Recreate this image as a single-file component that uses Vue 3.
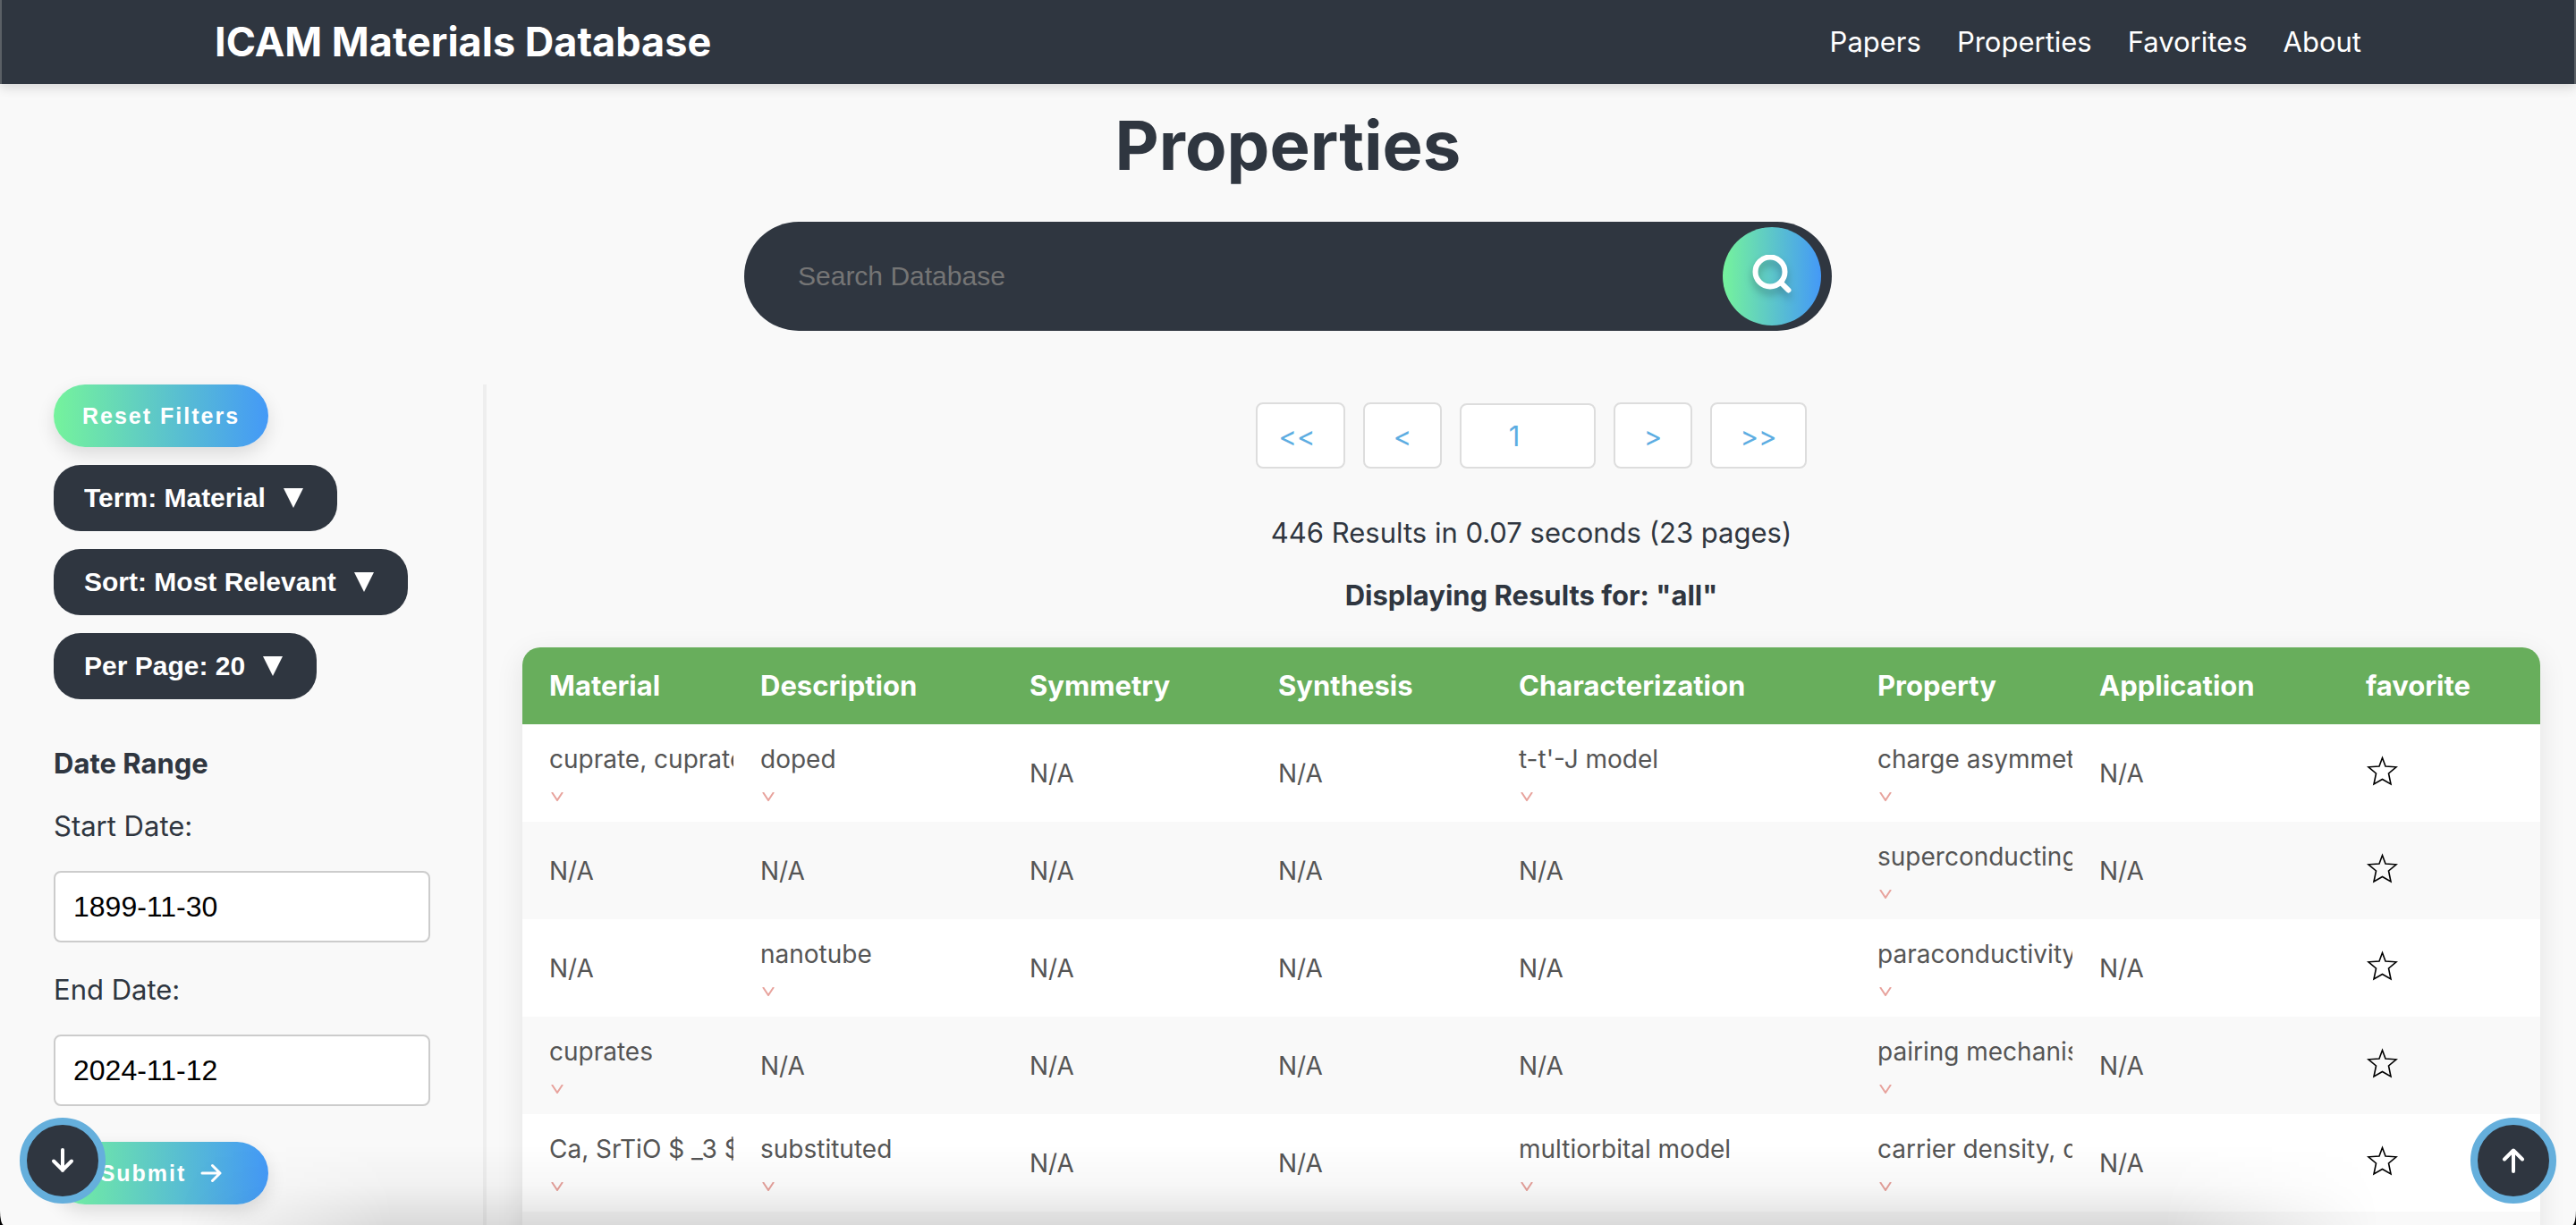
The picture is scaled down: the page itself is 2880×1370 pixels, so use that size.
<script setup>
import { ref } from 'vue'

const links = ['Papers', 'Properties', 'Favorites', 'About']
const filters = [
  { name: 'Term', options: ['Material', 'Description', 'Symmetry', 'Synthesis'] },
  { name: 'Sort', options: ['Most Relevant', 'Date'] },
  { name: 'Per Page', options: ['20', '10', '50', '100'] }
]
const query = ref('')
const page = ref(1)
const startDate = ref('1899-11-30')
const endDate = ref('2024-11-12')

const columns = [
  { title: 'Material', width: 236 },
  { title: 'Description', width: 301 },
  { title: 'Symmetry', width: 278 },
  { title: 'Synthesis', width: 269 },
  { title: 'Characterization', width: 401 },
  { title: 'Property', width: 248 },
  { title: 'Application', width: 298 },
  { title: 'favorite', width: 225 }
]
const total = columns.reduce((sum, c) => sum + c.width, 0)
const rows = [
  ['cuprate, cuprates', 'doped', '', '', "t-t'-J model", 'charge asymmetry', ''],
  ['', '', '', '', '', 'superconducting', ''],
  ['', 'nanotube', '', '', '', 'paraconductivity', ''],
  ['cuprates', '', '', '', '', 'pairing mechanism', ''],
  ['Ca, SrTiO $ _3 $', 'substituted', '', '', 'multiorbital model', 'carrier density, d', ''],
  ['', '', '', '', '', '', '']
]
</script>

<template>
  <div class="page">
    <header class="topbar">
      <a class="brand" href="#">ICAM Materials Database</a>
      <nav class="nav">
        <a v-for="link in links" :key="link" href="#">{{ link }}</a>
      </nav>
    </header>

    <h1 class="title">Properties</h1>

    <form class="search" @submit.prevent>
      <input v-model="query" type="text" placeholder="Search Database" aria-label="Search Database" />
      <button type="submit" aria-label="Search">
        <svg viewBox="0 0 48 48" width="48" height="48" fill="none" stroke="#fff" stroke-width="6">
          <circle cx="22" cy="19" r="16.5" />
          <path d="M34 31l8.500 8.500" stroke-linecap="round" />
        </svg>
      </button>
    </form>

    <div class="content">
      <aside class="sidebar">
        <button class="pill" type="button">Reset Filters</button>
        <span v-for="f in filters" :key="f.name" class="dropdown">
          <select :aria-label="f.name">
            <option v-for="o in f.options" :key="o">{{ f.name }}: {{ o }}</option>
          </select>
          <span class="caret"></span>
        </span>
        <form class="dates" @submit.prevent>
          <h2>Date Range</h2>
          <label for="start">Start Date:</label>
          <input id="start" v-model="startDate" type="text" />
          <label for="end">End Date:</label>
          <input id="end" v-model="endDate" type="text" />
          <button class="pill" type="submit">
            Submit
            <svg viewBox="0 0 24 24" width="24" height="24" fill="none" stroke="#fff" stroke-width="3" stroke-linecap="round" stroke-linejoin="round">
              <path d="M2 12h20M13.500 3.500l8.500 8.500l-8.500 8.500" />
            </svg>
          </button>
        </form>
      </aside>

      <main class="results">
        <div class="pager">
          <button type="button" class="first">&lt;&lt;</button>
          <button type="button">&lt;</button>
          <input v-model="page" type="text" aria-label="Page" />
          <button type="button">&gt;</button>
          <button type="button" class="last">&gt;&gt;</button>
        </div>
        <p class="summary">446 Results in 0.07 seconds (23 pages)</p>
        <p class="summary strong">Displaying Results for: "all"</p>

        <table class="grid">
          <colgroup>
            <col v-for="c in columns" :key="c.title" :style="{ width: (c.width / total) * 100 + '%' }" />
          </colgroup>
          <thead>
            <tr>
              <th v-for="c in columns" :key="c.title" scope="col">{{ c.title }}</th>
            </tr>
          </thead>
          <tbody>
            <tr v-for="(row, i) in rows" :key="i">
              <td v-for="(cell, j) in row" :key="j">
                <template v-if="cell">
                  <div class="value">{{ cell }}</div>
                  <button class="expand" type="button" aria-label="Expand">
                    <svg viewBox="0 0 14 10" width="14" height="10" fill="none" stroke="#e8a39d" stroke-width="2">
                      <path d="M1 0l6 9l6-9" />
                    </svg>
                  </button>
                </template>
                <template v-else>N/A</template>
              </td>
              <td>
                <button class="star" type="button" aria-label="Add to favorites">
                  <svg viewBox="0 0 36 36" width="36" height="36" fill="none" stroke="#000" stroke-width="1.6">
                    <path d="M18.500 3.500L22 13L34 13.800L25.500 21L28 33L18.500 27.500L9 33L11.500 21L3 13.800L15 13Z" />
                  </svg>
                </button>
              </td>
            </tr>
          </tbody>
        </table>
      </main>
    </div>

    <div class="fade"></div>
    <button class="jump down" type="button" aria-label="Scroll to bottom">
      <svg viewBox="0 0 28 28" width="28" height="28">
        <path d="M14 2v23M4 14.500l10 10l10-10" />
      </svg>
    </button>
    <button class="jump up" type="button" aria-label="Scroll to top">
      <svg viewBox="0 0 28 28" width="28" height="28">
        <path d="M14 26V3M4 12.500L14 2.500l10 10" />
      </svg>
    </button>
  </div>
</template>

<style>
html,
body {
  margin: 0;
  height: 100%;
  overflow: hidden;
  background: #000;
}
</style>

<style scoped>
.page {
  height: 100vh;
  overflow: hidden;
  position: relative;
  border-radius: 0 0 4px 4px / 0 0 16px 16px;
  background: #f9f9f9;
  color: #2f3640;
  font-family: Inter, sans-serif;
  font-size: 31px;
  line-height: 50px;
}
button,
input,
select {
  box-sizing: border-box;
  margin: 0;
  font-family: "Liberation Sans", Arial, sans-serif;
}
button {
  cursor: pointer;
}
svg {
  display: block;
}
.topbar {
  display: flex;
  align-items: center;
  justify-content: space-between;
  height: 94px;
  padding: 0 238px;
  border: 0 solid #5b6066;
  border-width: 0 2px;
  background: #2f3640;
  box-shadow: 0 4px 12px rgba(0, 0, 0, 0.14);
}
.topbar a {
  color: #fff;
  text-decoration: none;
}
.brand {
  font-size: 45px;
  font-weight: 700;
}
.nav {
  display: flex;
  gap: 40px;
}
.title {
  margin: 18px 0 36px;
  font-size: 76px;
  line-height: 100px;
  font-weight: 700;
  text-align: center;
}
.search {
  display: flex;
  align-items: center;
  box-sizing: border-box;
  width: 1216px;
  max-width: 90%;
  height: 122px;
  margin: 0 auto 60px;
  padding: 0 12px 0 60px;
  border-radius: 61px;
  background: #2f3640;
}
.search input {
  flex: 1;
  min-width: 0;
  padding: 0;
  border: 0;
  outline: 0;
  background: none;
  color: #fff;
  font-size: 30px;
}
.search input::placeholder {
  color: #757575;
}
.search button {
  display: flex;
  align-items: center;
  justify-content: center;
  width: 110px;
  height: 110px;
  padding: 0;
  border: 0;
  border-radius: 50%;
  background: linear-gradient(90deg, #75f39c, #4499f7);
}
.search svg {
  filter: drop-shadow(0 6px 4px rgba(0, 0, 0, 0.25));
}
.content {
  display: flex;
}
.sidebar {
  display: flex;
  flex-direction: column;
  align-items: flex-start;
  gap: 20px;
  box-sizing: border-box;
  flex: 0 0 544px;
  min-width: 0;
  padding: 0 59px 0 60px;
  border-right: 4px solid #eee;
}
.pill {
  display: flex;
  align-items: center;
  justify-content: center;
  gap: 16px;
  width: 240px;
  height: 70px;
  padding: 0;
  border: 0;
  border-radius: 35px;
  background: linear-gradient(90deg, #75f39c, #4499f7);
  box-shadow: 0 8px 20px rgba(0, 0, 0, 0.12);
  color: #fff;
  font-size: 25px;
  font-weight: 700;
  letter-spacing: 2px;
}
.dropdown {
  display: flex;
  align-items: center;
  gap: 20px;
  height: 74px;
  padding: 0 38px 0 34px;
  border-radius: 30px;
  background: #2f3640;
}
.dropdown select {
  appearance: none;
  field-sizing: content;
  padding: 0 0 2px;
  border: 0;
  background: none;
  color: #fff;
  font-size: 30px;
  font-weight: 700;
}
.caret {
  border: 11px solid transparent;
  border-top: 22px solid #fff;
  border-bottom: 0;
}
.dates {
  display: flex;
  flex-direction: column;
  align-self: stretch;
  margin-top: 27px;
}
.dates h2 {
  margin: 0 0 20px;
  font-size: 31px;
  font-weight: 700;
}
.dates label {
  margin-bottom: 25px;
}
.dates input {
  width: 100%;
  height: 80px;
  margin-bottom: 28px;
  padding: 0 20px;
  border: 2px solid #ccc;
  border-radius: 8px;
  background: #fff;
  color: #000;
  font-size: 32px;
}
.dates .pill {
  margin-top: 12px;
}
.results {
  flex: 1;
  min-width: 0;
  padding: 20px 40px 0;
}
.pager {
  display: flex;
  align-items: flex-end;
  justify-content: center;
  gap: 20px;
  margin-bottom: 47px;
}
.pager button,
.pager input {
  width: 88px;
  height: 74px;
  padding: 0;
  border: 2px solid #ddd;
  border-radius: 8px;
  background: #fff;
  color: #5dade2;
  font-family: Inter, sans-serif;
  font-size: 31px;
  text-align: center;
}
.pager .first {
  width: 100px;
  padding-right: 8px;
}
.pager .last {
  width: 108px;
}
.pager input {
  width: 152px;
  height: 73px;
  padding-right: 30px;
}
.summary {
  margin: 0 0 20px;
  text-align: center;
}
.summary.strong {
  margin-bottom: 33px;
  font-weight: 700;
}
.grid {
  width: 100%;
  table-layout: fixed;
  border-collapse: collapse;
  border-radius: 20px 20px 0 0;
  overflow: hidden;
  background: #fff;
  box-shadow: 0 8px 32px rgba(0, 0, 0, 0.09);
}
.grid th {
  height: 86px;
  padding: 0 0 0 30px;
  background: #68ae5c;
  color: #fff;
  font-weight: 700;
  text-align: left;
}
.grid td {
  height: 109px;
  padding: 0 0 0 30px;
  overflow: hidden;
  color: #555;
  font-size: 28px;
  line-height: 44px;
  white-space: nowrap;
}
.grid tbody tr:nth-child(even) {
  background: #f9f9f9;
}
.expand,
.star {
  display: block;
  padding: 0;
  border: 0;
  background: none;
}
.expand {
  margin: 15px 0 7px 2px;
}
.star {
  margin-bottom: 5px;
}
.fade {
  position: fixed;
  right: 220px;
  bottom: 0;
  left: 200px;
  height: 90px;
  background: linear-gradient(rgba(0, 0, 0, 0), rgba(0, 0, 0, 0.03) 50%, rgba(0, 0, 0, 0.12));
  mask-image: linear-gradient(90deg, transparent, #000 240px, #000 calc(100% - 240px), transparent);
  pointer-events: none;
}
.jump {
  position: fixed;
  bottom: 24px;
  display: flex;
  align-items: center;
  justify-content: center;
  width: 96px;
  height: 96px;
  padding: 0;
  border: 8px solid #65afdc;
  border-radius: 50%;
  background: #2f3640;
}
.jump svg {
  fill: none;
  stroke: #fff;
  stroke-width: 4px;
  stroke-linecap: round;
  stroke-linejoin: round;
}
.down {
  left: 22px;
}
.up {
  right: 22px;
}
</style>
